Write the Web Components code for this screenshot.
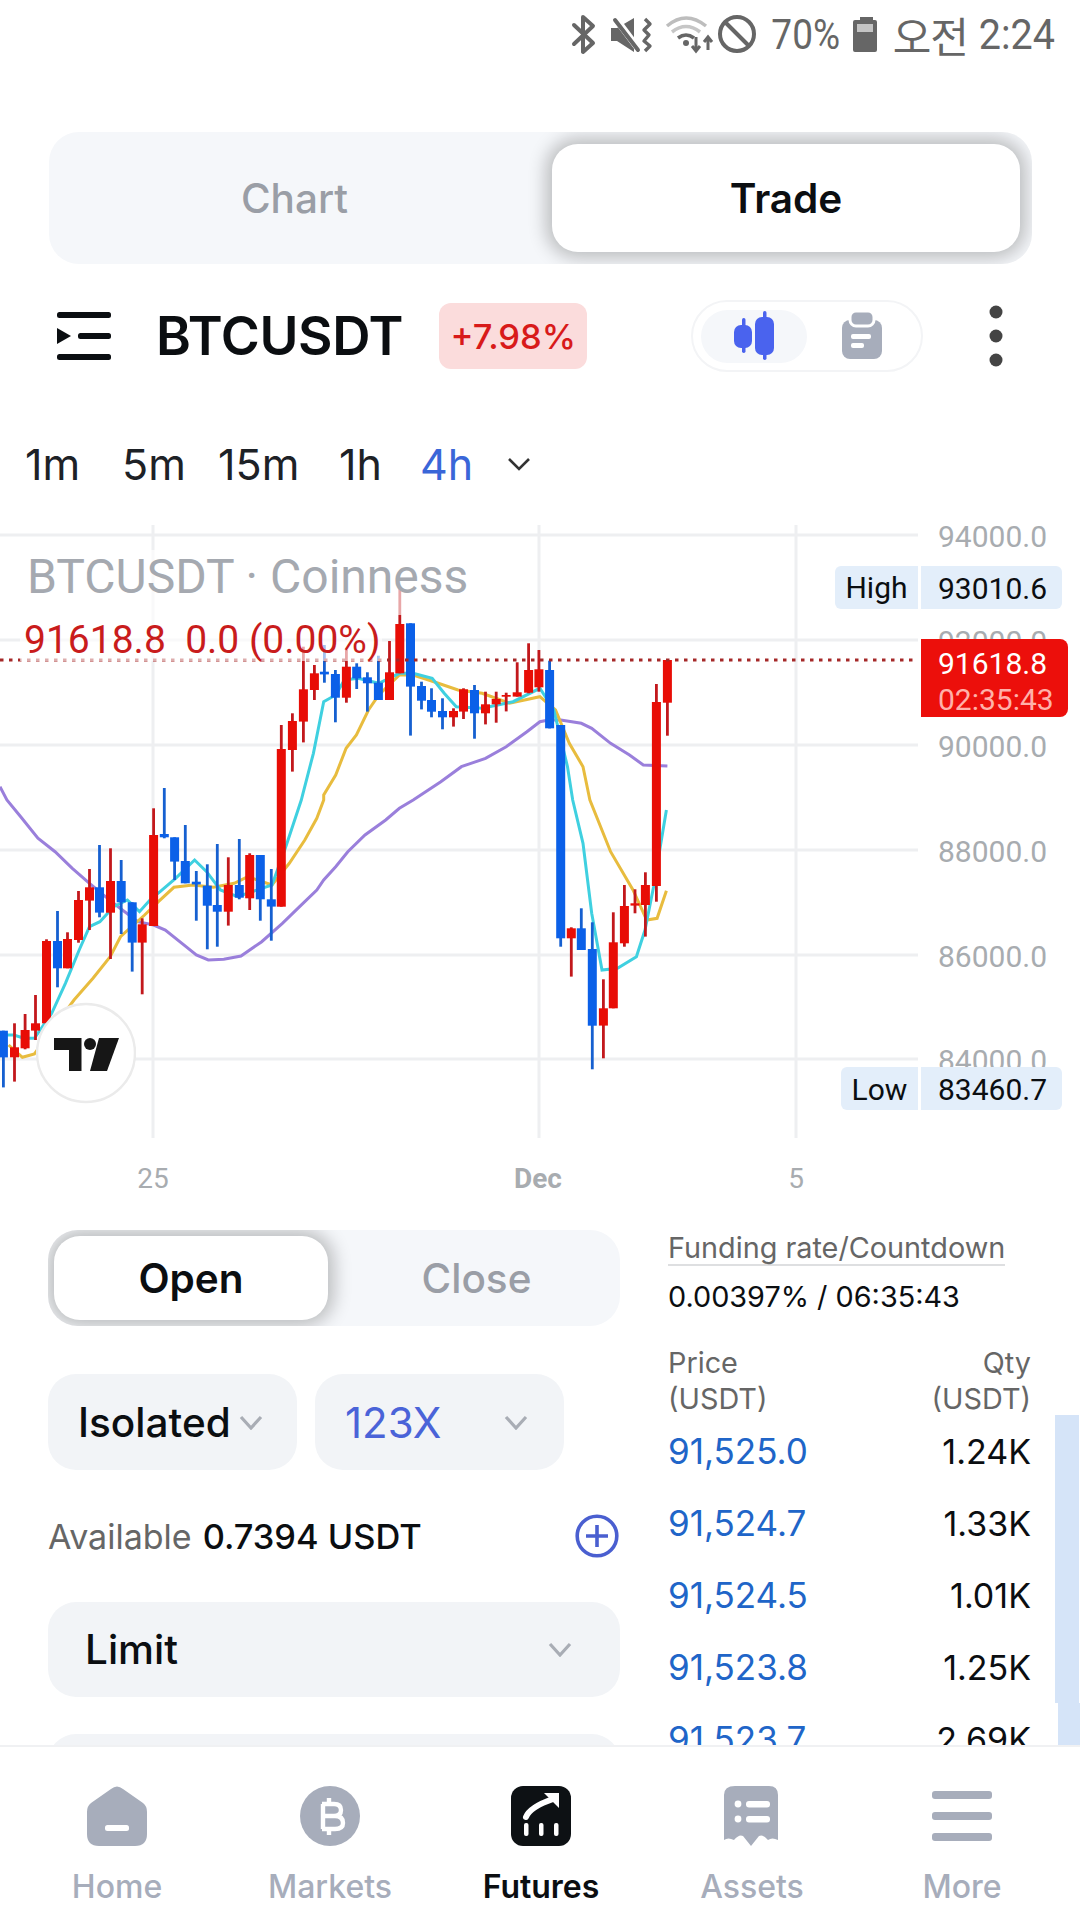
<!DOCTYPE html>
<html lang="en">
<head>
<meta charset="utf-8">
<title>BTCUSDT</title>
<style>
  html, body { margin: 0; padding: 0; background: #fff; }
  body { width: 1080px; height: 1920px; overflow: hidden; font-family: Inter, "Noto Sans", sans-serif; }
</style>
</head>
<body>
<app-shell>
  <status-bar></status-bar>
  <seg-tabs style="--track-h:132px;--active-w:468px;--pad:12px;--pad-left:0px;margin:62px 48px 0 49px;font-size:40.5px">
    <seg-tab style="padding-right:12px">Chart</seg-tab>
    <seg-tab active>Trade</seg-tab>
  </seg-tabs>
  <symbol-bar symbol="BTCUSDT" change="+7.98%"></symbol-bar>
  <time-frames></time-frames>
  <kline-chart></kline-chart>
  <trade-panel>
    <order-form slot="left"></order-form>
    <order-book slot="right"></order-book>
  </trade-panel>
  <bottom-nav slot="nav"></bottom-nav>
</app-shell>

<script>
class AppShell extends HTMLElement {
  constructor() {
    super();
    this.attachShadow({ mode: "open" });
    this.shadowRoot.innerHTML = `
      <style>
        :host { display: flex; flex-direction: column; width: 1080px; height: 1920px; background: #fff; }
        .main { flex: 1; min-height: 0; overflow: hidden; display: flex; flex-direction: column; }
      </style>
      <div class="main"><slot></slot></div>
      <slot name="nav"></slot>
    `;
  }
}
customElements.define("app-shell", AppShell);

class StatusBar extends HTMLElement {
  constructor() {
    super();
    this.attachShadow({ mode: "open" });
    this.shadowRoot.innerHTML = `
      <style>
        :host { display: block; height: 70px; color: #666; font-family: Roboto, sans-serif; flex: none; }
        .bar { height: 70px; position: relative; display: flex; align-items: flex-start; justify-content: flex-end; padding-right: 25px; box-sizing: border-box; }
        svg { position: absolute; left: 0; top: 0; }
        .txt { display: inline-block; font-size: 42px; line-height: 70px; height: 70px; transform: scaleX(.88); transform-origin: right center; white-space: nowrap; }
        .pct { position: absolute; right: 240px; }
        .ko { position: absolute; right: 112px; font-family: "Noto Sans CJK KR", sans-serif; font-weight: 400; font-size: 42px; transform: none; letter-spacing: -1px; }
        .time { position: absolute; right: 25px; transform: scaleX(.94); }
      </style>
      <div class="bar">
        <svg width="1080" height="70" viewBox="0 0 1080 70">
          <path d="M574 25L593 43L583 52V17L593 26L574 44" fill="none" stroke="#666" stroke-width="4" stroke-linejoin="round" stroke-linecap="round"/>
          <path d="M611 28H617L634 18V52L617 41H611Z" fill="#666"/>
          <path d="M616 19L640 51" stroke="#fff" stroke-width="7"/>
          <path d="M615 20L638 50" stroke="#666" stroke-width="4" stroke-linecap="round"/>
          <path d="M645 19L650 24L644 30L649 35L644 41L650 46L645 51" fill="none" stroke="#666" stroke-width="3.4" stroke-linejoin="round"/>
          <path d="M667 26Q686 10 706 26" fill="none" stroke="#bdbdbd" stroke-width="3.5"/>
          <path d="M672 32Q686 21 700 32" fill="none" stroke="#c6c6c6" stroke-width="3.5"/>
          <path d="M678 38Q686 32 694 38" fill="none" stroke="#666" stroke-width="3.5"/>
          <circle cx="686" cy="43" r="3" fill="#666"/>
          <path d="M696 37V50M692 46L696 51L700 46" fill="none" stroke="#666" stroke-width="3"/>
          <path d="M708 50V38M704 42L708 37L712 42" fill="none" stroke="#666" stroke-width="3"/>
          <circle cx="737" cy="34" r="17" fill="none" stroke="#666" stroke-width="4"/>
          <path d="M725 22L749 46" stroke="#666" stroke-width="4"/>
          <path d="M860 17H873V20H875Q877 20 877 22V50Q877 52 875 52H855Q853 52 853 50V22Q853 20 855 20H860Z" fill="#666"/>
          <rect x="857" y="24" width="16" height="8" fill="#c4c4c4"/>
        </svg>
        <span class="txt pct">70%</span>
        <span class="txt ko">오전</span>
        <span class="txt time">2:24</span>
      </div>
    `;
  }
}
customElements.define("status-bar", StatusBar);

class SegTabs extends HTMLElement {
  constructor() {
    super();
    this.attachShadow({ mode: "open" });
    this.shadowRoot.innerHTML = `
      <style>
        :host { display: block; flex: none; }
        .track {
          height: var(--track-h);
          box-sizing: border-box;
          padding: var(--pad) var(--pad-right, var(--pad)) var(--pad) var(--pad-left, var(--pad));
          display: flex;
          overflow: hidden;
          background: #f5f7fa;
          border-radius: 30px;
        }
      </style>
      <div class="track"><slot></slot></div>
    `;
  }
}
customElements.define("seg-tabs", SegTabs);

class SegTab extends HTMLElement {
  constructor() {
    super();
    this.attachShadow({ mode: "open" });
    this.shadowRoot.innerHTML = `
      <style>
        :host { display: flex; flex: 1; align-items: center; justify-content: center; color: #9a9ea6; font-weight: 500; }
        :host([active]) {
          flex: none;
          width: var(--active-w);
          color: #0b0e11;
          font-weight: 600;
          background: #fff;
          border-radius: 26px;
          box-shadow: 0 0 18px 6px rgba(0,0,0,.24);
        }
      </style>
      <slot></slot>
    `;
  }
}
customElements.define("seg-tab", SegTab);

class SymbolBar extends HTMLElement {
  constructor() {
    super();
    this.attachShadow({ mode: "open" });
    this.shadowRoot.innerHTML = `
      <style>
        :host { display: block; flex: none; margin-top: 36px; height: 72px; }
        .row { display: flex; align-items: center; height: 72px; padding-left: 57px; }
        .name { margin-left: 45px; font-size: 53px; font-weight: 600; color: #0b0e11; letter-spacing: -.3px; }
        .badge { margin-left: 36px; width: 148px; height: 66px; border-radius: 12px; background: #fbdcdc; color: #d81a1a; font-size: 34.5px; font-weight: 500; display: flex; align-items: center; justify-content: center; white-space: nowrap; }
        .toggle { position: absolute; left: 691px; width: 232px; height: 72px; box-sizing: border-box; border: 2px solid #f3f4f6; border-radius: 36px; }
        .on { position: absolute; left: 8px; top: 8px; width: 106px; height: 53px; border-radius: 27px; background: #f5f7fa; }
        .toggle svg { position: absolute; left: -3px; top: -2px; }
        .dots { position: absolute; left: 989px; }
      </style>
      <div class="row">
        <svg width="54" height="48" viewBox="0 0 54 48">
          <rect x="0" y="0" width="54" height="6" rx="2.5" fill="#0b0e11"/>
          <rect x="21" y="21" width="33" height="6" rx="2.5" fill="#0b0e11"/>
          <rect x="0" y="42" width="54" height="6" rx="2.5" fill="#0b0e11"/>
          <path d="M0 16L14 24L0 32Z" fill="#0b0e11"/>
        </svg>
        <span class="name">${this.getAttribute("symbol")}</span>
        <span class="badge">${this.getAttribute("change")}</span>
        <div class="toggle">
          <div class="on"></div>
          <svg width="232" height="72" viewBox="690 300 232 72">
            <rect x="742" y="318" width="3.5" height="35" rx="1.7" fill="#4a63ee"/>
            <rect x="734" y="325" width="18" height="23" rx="7" fill="#4a63ee"/>
            <rect x="763" y="311" width="3.5" height="49" rx="1.7" fill="#4a63ee"/>
            <rect x="755" y="317" width="19" height="38" rx="7" fill="#4a63ee"/>
            <rect x="842" y="320" width="40" height="39" rx="8" fill="#a7adbb"/>
            <rect x="850" y="311" width="24" height="15" rx="6" fill="#a7adbb" stroke="#fff" stroke-width="3"/>
            <rect x="851" y="334" width="20" height="5" rx="2" fill="#fff"/>
            <rect x="851" y="343" width="13" height="5" rx="2" fill="#fff"/>
          </svg>
        </div>
        <svg class="dots" width="14" height="62" viewBox="0 0 14 62">
          <circle cx="7" cy="7" r="6.5" fill="#444"/>
          <circle cx="7" cy="31" r="6.5" fill="#444"/>
          <circle cx="7" cy="55" r="6.5" fill="#444"/>
        </svg>
      </div>
    `;
  }
}
customElements.define("symbol-bar", SymbolBar);

class TimeFrames extends HTMLElement {
  constructor() {
    super();
    this.attachShadow({ mode: "open" });
    this.shadowRoot.innerHTML = `
      <style>
        :host { display: block; flex: none; margin-top: 60px; height: 64px; }
        .row { display: grid; grid-template-columns: 97px 96px 121px 81px 87px 24px; align-items: center; height: 64px; padding-left: 25px; font-size: 43px; color: #1d2126; font-weight: 400; }
        .on { color: #3a66d8; }
      </style>
      <div class="row">
        <span>1m</span><span>5m</span><span>15m</span><span>1h</span><span class="on">4h</span>
        <svg width="24" height="14" viewBox="0 0 24 14"><path d="M2 2L12 12L22 2" fill="none" stroke="#333" stroke-width="2.6"/></svg>
      </div>
    `;
  }
}
customElements.define("time-frames", TimeFrames);

// candle data traced from the reference, [x, wickTop, wickBottom, bodyTop, bodyBottom, "r"|"b"]
const CANDLES_A = [
  [10,692,862,692,772,"b"],[42,670,845,742,772,"r"],[73,642,748,690,745,"r"],[103,585,720,670,692,"r"],
  [135,418,660,423,670,"r"],[167,333,562,423,505,"b"],[196,397,505,417,505,"r"],[228,273,428,300,420,"r"],
  [260,207,390,262,302,"r"],[289,135,352,262,338,"b"],[321,145,477,243,338,"r"],[352,180,402,243,307,"b"],
  [384,307,515,307,428,"b"],[413,355,583,373,428,"r"],[446,25,378,105,378,"r"],[477,-36,115,102,112,"b"],
  [507,112,240,112,185,"b"],[538,75,250,183,250,"b"],[570,213,362,245,253,"b"],[602,193,448,257,317,"b"],
  [631,132,440,315,335,"b"],[663,172,377,255,335,"r"],[695,117,298,255,293,"b"],[725,160,330,165,295,"r"],
  [756,165,362,165,298,"b"],[788,207,422,298,320,"b"],[817,-225,320,-153,320,"r"]
];
const CANDLES_B = [
  [849,610,785,633,720,"r"],[881,410,697,538,635,"r"],[913,465,570,490,540,"r"],[942,405,518,485,493,"b"],
  [974,480,637,492,563,"b"],[1006,420,578,470,563,"r"],[1036,460,537,470,505,"b"],[1067,487,605,502,520,"b"],
  [1099,437,570,518,570,"b"],[1131,393,570,487,570,"r"],[1161,235,490,342,490,"r"],[1192,340,677,340,530,"b"],
  [1224,515,598,528,572,"b"],[1253,535,622,570,605,"b"],[1285,565,658,603,622,"b"],[1317,595,650,603,622,"r"],
  [1346,535,627,538,605,"r"],[1378,525,686,540,610,"b"],[1410,545,643,583,610,"r"],[1441,545,638,567,583,"r"],
  [1470,548,604,555,560,"r"],[1502,457,560,547,560,"r"],[1535,400,550,480,548,"r"],[1565,420,545,478,532,"r"]
];
const CANDLES_C = [
  [28,452,655,480,655,"b"],[370,450,677,450,578,"r"]
];
const CANDLES_D = [
  [60,-225,440,-225,415,"b"],[91,382,530,385,415,"r"],[120,325,450,385,450,"b"],[152,367,808,447,677,"b"],
  [184,538,775,625,677,"r"],[213,337,625,427,625,"r"],[245,255,440,318,430,"r"],[276,268,340,310,317,"r"],
  [306,217,410,255,315,"r"],[338,-348,305,-294,258,"r"]
];
const conv = {
  a: (x, y) => [x / 2.904, 800 + y / 3],
  b: (x, y) => [x / 2.904, 510 + y / 3],
  c: (x, y) => [540 + x / 2.904, 510 + y / 3],
  d: (x, y) => [540 + x / 2.904, 800 + y / 3]
};
const PURPLE = [
  ["b",0,830],["a",20,0],["a",60,50],["a",110,115],["a",160,155],["a",210,205],["a",260,250],["a",330,310],["a",400,365],
  ["a",446,375],["a",480,390],["a",540,440],["a",570,465],["a",605,480],["a",650,478],["a",700,468],["a",760,425],
  ["a",820,370],["a",870,320],["a",920,270],["a",940,240],["a",975,200],["a",1010,155],["a",1060,105],["a",1120,60],
  ["a",1160,25],["a",1200,0],["b",1280,815],["b",1340,770],["b",1410,745],["b",1470,710],["b",1530,665],["b",1568,635],
  ["c",25,630],["c",60,630],["c",120,640],["c",150,655],["c",205,700],["c",260,735],["c",300,765],["c",370,768]
];
const CYAN = [
  ["a",0,705],["a",40,705],["a",70,715],["a",100,715],["a",150,640],["a",190,550],["a",230,450],["a",260,380],["a",290,365],
  ["a",330,320],["a",370,300],["a",405,335],["a",440,295],["a",465,275],["a",510,235],["a",565,180],["a",600,215],
  ["a",640,270],["a",690,290],["a",760,265],["a",790,255],["a",830,140],["a",875,0],["b",880,850],["b",910,730],["b",940,575],
  ["b",975,555],["b",1000,510],["b",1040,505],["b",1100,520],["b",1160,490],["b",1200,490],["b",1255,505],["b",1290,550],
  ["b",1325,590],["b",1400,595],["b",1490,575],["b",1568,535],["c",40,600],["c",80,770],["d",95,0],["d",125,130],["d",150,340],
  ["d",180,510],["d",225,505],["d",280,470],["d",305,390],["d",330,260],["d",367,30]
];
const YELLOW = [
  ["a",25,735],["a",65,772],["a",100,762],["a",215,600],["a",270,535],["a",320,470],["a",350,410],["a",420,345],["a",460,305],
  ["a",505,262],["a",560,255],["a",620,262],["a",680,250],["a",720,230],["a",790,255],["a",840,190],["a",885,120],["a",920,55],
  ["a",940,0],["b",940,855],["b",975,795],["b",1005,715],["b",1035,675],["b",1070,600],["b",1100,555],["b",1160,495],
  ["b",1200,495],["b",1260,515],["b",1330,540],["b",1400,550],["b",1480,580],["b",1568,560],["c",45,600],["c",85,700],
  ["c",125,770],["d",145,0],["d",205,155],["d",270,270],["d",310,360],["d",340,355],["d",367,272]
];

function linePoints(list) {
  return list.map(p => conv[p[0]](p[1], p[2]).map(n => n.toFixed(1)).join(",")).join(" ");
}
function candleRects(list, key) {
  const f = conv[key];
  return list.map(c => {
    const [x, wt] = f(c[0], c[1]);
    const wb = f(c[0], c[2])[1];
    const bt = f(c[0], c[3])[1];
    const bb = f(c[0], c[4])[1];
    const wick = c[5] === "r" ? "#c2181c" : "#1660d0";
    const body = c[5] === "r" ? "#e80d06" : "#0b60e8";
    return `<rect x="${(x - 1.4).toFixed(1)}" y="${wt.toFixed(1)}" width="2.8" height="${(wb - wt).toFixed(1)}" fill="${wick}"/>` +
      `<rect x="${(x - 4.5).toFixed(1)}" y="${bt.toFixed(1)}" width="9" height="${(bb - bt).toFixed(1)}" fill="${body}"/>`;
  }).join("");
}

class KlineChart extends HTMLElement {
  constructor() {
    super();
    this.attachShadow({ mode: "open" });
    const gridY = [535, 640, 745, 850, 955, 1059];
    const gridX = [153, 539, 796];
    const axis = [["94000.0", 537], ["92000.0", 642], ["90000.0", 747], ["88000.0", 852], ["86000.0", 957], ["84000.0", 1061]];
    this.shadowRoot.innerHTML = `
      <style>
        :host { display: block; position: relative; flex: none; margin-top: 29px; width: 1080px; height: 675px; overflow: hidden; font-family: Roboto, sans-serif; }
        svg { position: absolute; left: 0; top: 0; }
        .abs { position: absolute; white-space: pre; line-height: 1; }
        .axis { left: 938px; font-size: 30px; color: #a8acb0; }
        .date { font-size: 28px; color: #a8acb0; transform: translateX(-50%); top: 640px; }
        .date.b { font-weight: 700; }
        .title { left: 27px; top: 28px; font-size: 48px; color: #a5a9b0; }
        .ohlc { left: 24px; top: 96px; font-size: 39px; color: #c91c1c; }
        .tag { position: absolute; background: #e3eefa; height: 43px; font-size: 30px; color: #0b0e11; display: flex; align-items: center; box-sizing: border-box; }
        .tag.k { border-radius: 6px 0 0 6px; justify-content: center; }
        .tag.v { border-radius: 0 6px 6px 0; left: 921px; width: 141px; padding: 2px 0 0 17px; }
        .price { position: absolute; left: 921px; top: 114px; width: 147px; height: 78px; box-sizing: border-box; padding: 7px 0 0 17px; background: #ec0f0b; border-radius: 0 8px 8px 0; font-size: 30px; line-height: 36px; color: #fff; }
        .price span { color: #ffb1a9; display: block; }
        .logo { position: absolute; left: 36px; top: 477px; }
      </style>
      <svg width="1080" height="675" viewBox="0 525 1080 675">
        ${gridY.map(y => `<rect x="0" y="${y - 1.5}" width="918" height="3" fill="#eeeff1"/>`).join("")}
        ${gridX.map(x => `<rect x="${x - 1.5}" y="525" width="3" height="613" fill="#eeeff1"/>`).join("")}
        <polyline points="${linePoints(PURPLE)}" fill="none" stroke="#9a7fdb" stroke-width="3"/>
        <polyline points="${linePoints(YELLOW)}" fill="none" stroke="#e8bc3e" stroke-width="3"/>
        <polyline points="${linePoints(CYAN)}" fill="none" stroke="#3fd0e0" stroke-width="3"/>
        ${candleRects(CANDLES_A, "a")}${candleRects(CANDLES_B, "b")}${candleRects(CANDLES_C, "c")}${candleRects(CANDLES_D, "d")}
        <line x1="0" y1="660" x2="916" y2="660" stroke="#a52828" stroke-width="3" stroke-dasharray="3.5 5.5"/>
        <rect x="20" y="550" width="452" height="65" fill="#fff" fill-opacity=".62"/>
        <rect x="20" y="615" width="362" height="46" fill="#fff" fill-opacity=".62"/>
      </svg>
      ${axis.map(a => `<span class="abs axis" style="top:${a[1] - 525 - 15}px">${a[0]}</span>`).join("")}
      <span class="abs date" style="left:153px">25</span>
      <span class="abs date b" style="left:538px">Dec</span>
      <span class="abs date" style="left:796px">5</span>
      <span class="abs title">BTCUSDT · Coinness</span>
      <span class="abs ohlc">91618.8  0.0 (0.00%)</span>
      <div class="tag k" style="left:835px;top:41px;width:83px">High</div>
      <div class="tag v" style="top:41px">93010.6</div>
      <div class="tag k" style="left:841px;top:542px;width:77px;padding-top:2px">Low</div>
      <div class="tag v" style="top:542px">83460.7</div>
      <div class="price">91618.8<span>02:35:43</span></div>
      <svg class="logo" width="100" height="102" viewBox="36 1002 100 102">
        <circle cx="86" cy="1053" r="49" fill="#fff" stroke="#ebebeb" stroke-width="2.5"/>
        <path d="M54 1038H81.5V1071H69V1050H54Z" fill="#161616"/>
        <circle cx="90" cy="1044" r="6" fill="#161616"/>
        <path d="M99 1038H119L107 1071H90Z" fill="#161616"/>
      </svg>
    `;
  }
}
customElements.define("kline-chart", KlineChart);

class TradePanel extends HTMLElement {
  constructor() {
    super();
    this.attachShadow({ mode: "open" });
    this.shadowRoot.innerHTML = `
      <style>
        :host { display: grid; grid-template-columns: 572px 363px; column-gap: 48px; padding-left: 48px; margin-top: 30px; flex: none; }
      </style>
      <slot name="left"></slot>
      <slot name="right"></slot>
    `;
  }
}
customElements.define("trade-panel", TradePanel);

class SelectBox extends HTMLElement {
  constructor() {
    super();
    this.attachShadow({ mode: "open" });
    this.shadowRoot.innerHTML = `
      <style>
        :host { display: flex; align-items: center; justify-content: space-between; box-sizing: border-box; height: 96px; background: #f2f4f7; border-radius: 28px; font-size: 40.5px; font-weight: 500; color: #0b0e11; }
        svg { display: block; flex: none; }
      </style>
      <slot></slot>
      <svg width="24" height="15" viewBox="0 0 24 15"><path d="M2 2L12 13L22 2" fill="none" stroke="#a9adb5" stroke-width="3.2"/></svg>
    `;
  }
}
customElements.define("select-box", SelectBox);

class OrderForm extends HTMLElement {
  constructor() {
    super();
    this.attachShadow({ mode: "open" });
    this.shadowRoot.innerHTML = `
      <style>
        :host { display: block; }
        .tabs { --track-h: 96px; --active-w: 274px; --pad: 6px; --pad-right: 0px; --pad-left: 6px; font-size: 40.5px; display: block; }
        .close { padding-left: 5px; }
        .pair { display: flex; gap: 18px; margin-top: 48px; }
        .iso { width: 249px; padding: 0 34px 0 30px; }
        .lev { width: 249px; padding: 0 36px 0 30px; color: #4a63d8; font-weight: 400; font-size: 42px; }
        .avail { display: flex; align-items: center; height: 60px; margin-top: 36px; font-size: 34px; color: #666; }
        .avail b { margin-left: 11px; font-weight: 500; font-size: 34.4px; color: #0b0e11; }
        .avail svg { margin-left: auto; margin-right: 1px; }
        .limit { padding: 0 48px 0 37px; margin-top: 36px; height: 95px; }
        .next { display: block; margin-top: 37px; height: 60px; background: #f2f4f7; border-radius: 28px 28px 0 0; }
      </style>
      <seg-tabs class="tabs">
        <seg-tab active>Open</seg-tab>
        <seg-tab class="close">Close</seg-tab>
      </seg-tabs>
      <div class="pair">
        <select-box class="iso">Isolated</select-box>
        <select-box class="lev">123X</select-box>
      </div>
      <div class="avail">
        <span>Available</span><b>0.7394 USDT</b>
        <svg width="44" height="44" viewBox="0 0 44 44">
          <circle cx="22" cy="22" r="19.8" fill="none" stroke="#4a5fd0" stroke-width="3.6"/>
          <path d="M22 11V33M11 22H33" stroke="#4a5fd0" stroke-width="3.6"/>
        </svg>
      </div>
      <select-box class="limit">Limit</select-box>
      <div class="next"></div>
    `;
  }
}
customElements.define("order-form", OrderForm);

class BookRow extends HTMLElement {
  constructor() {
    super();
    this.attachShadow({ mode: "open" });
    this.shadowRoot.innerHTML = `
      <style>
        :host { display: flex; position: relative; justify-content: space-between; align-items: center; height: 72px; font-size: 35px; color: #0b0e11; }
        .p { color: #2065c8; }
        .q { font-size: 34px; }
        .depth { position: absolute; top: 0; bottom: 0; width: 24px; background: #d5e4f8; }
      </style>
      <span class="p">${this.getAttribute("price")}</span>
      <span class="q">${this.getAttribute("qty")}</span>
      <div class="depth" style="left:${this.getAttribute("depth")}px"></div>
    `;
  }
}
customElements.define("book-row", BookRow);

class OrderBook extends HTMLElement {
  constructor() {
    super();
    this.attachShadow({ mode: "open" });
    this.shadowRoot.innerHTML = `
      <style>
        :host { display: block; font-size: 28.8px; color: #666; }
        .fund { display: inline-block; line-height: 33px; border-bottom: 2px solid #dedfe1; }
        .val { color: #0b0e11; line-height: 36px; margin-top: 13px; }
        .head { display: flex; justify-content: space-between; line-height: 36px; margin-top: 30px; margin-bottom: -2px; }
        .r { text-align: right; }
      </style>
      <span class="fund">Funding rate/Countdown</span>
      <div class="val">0.00397% / 06:35:43</div>
      <div class="head"><div>Price<br>(USDT)</div><div class="r">Qty<br>(USDT)</div></div>
      <book-row price="91,525.0" qty="1.24K" depth="387"></book-row>
      <book-row price="91,524.7" qty="1.33K" depth="387"></book-row>
      <book-row price="91,524.5" qty="1.01K" depth="387"></book-row>
      <book-row price="91,523.8" qty="1.25K" depth="387"></book-row>
      <book-row price="91,523.7" qty="2.69K" depth="390"></book-row>
    `;
  }
}
customElements.define("order-book", OrderBook);

class BottomNav extends HTMLElement {
  constructor() {
    super();
    this.attachShadow({ mode: "open" });
    const icons = {
      Home: `<path d="M24 3Q30 -2 36 3L56 17Q60 20 60 26V48Q60 60 48 60H12Q0 60 0 48V26Q0 20 4 17Z" fill="#a7adbb"/><rect x="18" y="39" width="24" height="6" rx="2.5" fill="#fff"/>`,
      Markets: `<circle cx="30" cy="30" r="30" fill="#a7adbb"/><path d="M22 18H34Q41 18 41 24Q41 30 34 30H23M23 30H35Q43 30 43 37Q43 43 35 43H22M23 18V43M29 12V18M29 43V49" fill="none" stroke="#fff" stroke-width="4.4"/>`,
      Futures: `<rect width="60" height="60" rx="12" fill="#0d1114"/><path d="M15 31Q19 21 42 13" fill="none" stroke="#fff" stroke-width="6" stroke-linecap="round"/><path d="M33 7H48V22Z" fill="#fff"/><rect x="13" y="37" width="4.5" height="13" rx="2" fill="#fff"/><rect x="28" y="37" width="4.5" height="13" rx="2" fill="#fff"/><rect x="43" y="37" width="4.5" height="13" rx="2" fill="#fff"/>`,
      Assets: `<path d="M13 0H47Q56 0 56 9V54Q50 51 46 54Q41 48 37 50L29 60L21 50Q17 48 12 54Q6 51 2 54V9Q2 0 13 0Z" fill="#a7adbb"/><circle cx="16" cy="18" r="3.4" fill="#fff"/><circle cx="16" cy="33" r="3.4" fill="#fff"/><rect x="24" y="15" width="24" height="6.5" rx="3" fill="#fff"/><rect x="24" y="30" width="24" height="6.5" rx="3" fill="#fff"/>`,
      More: `<rect x="0" y="5" width="60" height="8" rx="3" fill="#a7adbb"/><rect x="0" y="26" width="60" height="8" rx="3" fill="#a7adbb"/><rect x="0" y="47" width="60" height="8" rx="3" fill="#a7adbb"/>`
    };
    const items = [["Home", false], ["Markets", false], ["Futures", true], ["Assets", false], ["More", false]];
    this.shadowRoot.innerHTML = `
      <style>
        :host { display: block; flex: none; height: 175px; box-sizing: border-box; background: #fff; border-top: 2px solid #f0f1f3; }
        nav { display: grid; grid-template-columns: 234px 192px 230px 192px 228px; padding-top: 39px; }
        .it { display: flex; flex-direction: column; align-items: center; font-size: 32px; font-weight: 500; color: #a7adbb; gap: 22px; line-height: 38px; }
        .it.on { color: #0b0e11; font-weight: 600; }
        svg { display: block; overflow: visible; }
      </style>
      <nav>
        ${items.map(i => `<div class="it ${i[1] ? "on" : ""}"><svg width="60" height="60" viewBox="0 0 60 60">${icons[i[0]]}</svg><span>${i[0]}</span></div>`).join("")}
      </nav>
    `;
  }
}
customElements.define("bottom-nav", BottomNav);
</script>
</body>
</html>
